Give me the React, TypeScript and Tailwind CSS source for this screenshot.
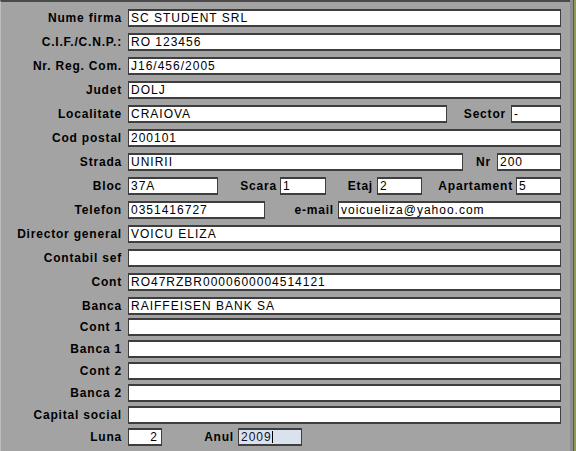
import React from 'react';

const font = { fontFamily: '"Liberation Sans", Arial, sans-serif' };

interface FieldProps {
  value?: string;
  className?: string;
  right?: boolean;
}

const Field: React.FC<FieldProps> = ({ value = '', className = '', right }) => (
  <div
    className={`h-[18px] bg-white border-y-2 border-x border-[#3e3e3e] flex items-center px-[2px] text-[12px] leading-none tracking-[1px] text-black whitespace-nowrap overflow-hidden ${
      right ? 'justify-end' : ''
    } ${className}`}
  >
    {value}
  </div>
);

const Label: React.FC<{ children: React.ReactNode; className?: string }> = ({ children, className = '' }) => (
  <div className={`text-[12px] font-bold tracking-[0.8px] text-black whitespace-nowrap text-right leading-none ${className}`}>
    {children}
  </div>
);

const Row: React.FC<{ label: string; children: React.ReactNode }> = ({ label, children }) => (
  <div className="flex items-center h-[18px]">
    <Label className="w-[121px] shrink-0">{label}</Label>
    <div className="ml-[6px] w-[433px] flex items-center">{children}</div>
  </div>
);

export default function App() {
  return (
    <div className="w-[576px] h-[451px] bg-[#a3a3a3] flex overflow-hidden" style={font}>
      <div className="flex-1 flex flex-col border-t-2 border-[#4a4a4a] border-l border-l-[#bdbdbd] pt-[7px]">
        <div className="flex flex-col gap-[6px]">
          <Row label="Nume firma">
            <Field value="SC STUDENT SRL" className="flex-1" />
          </Row>
          <Row label="C.I.F./C.N.P.:">
            <Field value="RO 123456" className="flex-1" />
          </Row>
          <Row label="Nr. Reg. Com.">
            <Field value="J16/456/2005" className="flex-1" />
          </Row>
          <Row label="Judet">
            <Field value="DOLJ" className="flex-1" />
          </Row>
          <Row label="Localitate">
            <Field value="CRAIOVA" className="w-[319px]" />
            <Label className="flex-1 pr-[5px]">Sector</Label>
            <Field value="-" className="w-[50px]" />
          </Row>
          <Row label="Cod postal">
            <Field value="200101" className="flex-1" />
          </Row>
          <Row label="Strada">
            <Field value="UNIRII" className="w-[335px]" />
            <Label className="flex-1 pr-[6px]">Nr</Label>
            <Field value="200" className="w-[64px]" />
          </Row>
          <Row label="Bloc">
            <Field value="37A" className="w-[90px]" />
            <Label className="w-[62px] pr-[3px]">Scara</Label>
            <Field value="1" className="w-[46px]" />
            <Label className="w-[51px] pr-[4px]">Etaj</Label>
            <Field value="2" className="w-[45px]" />
            <Label className="w-[94px] pr-[3px]">Apartament</Label>
            <Field value="5" className="flex-1" />
          </Row>
          <Row label="Telefon">
            <Field value="0351416727" className="w-[137px]" />
            <Label className="w-[73px] pr-[4px]">e-mail</Label>
            <Field value="voicueliza@yahoo.com" className="flex-1" />
          </Row>
          <Row label="Director general">
            <Field value="VOICU ELIZA" className="flex-1" />
          </Row>
          <Row label="Contabil sef">
            <Field className="flex-1" />
          </Row>
          <Row label="Cont">
            <Field value="RO47RZBR0000600004514121" className="flex-1" />
          </Row>
          <Row label="Banca">
            <Field value="RAIFFEISEN BANK SA" className="flex-1" />
          </Row>
        </div>
        <div className="flex flex-col gap-[4px] mt-[3px]">
          <Row label="Cont 1">
            <Field className="flex-1" />
          </Row>
          <Row label="Banca 1">
            <Field className="flex-1" />
          </Row>
          <Row label="Cont 2">
            <Field className="flex-1" />
          </Row>
          <Row label="Banca 2">
            <Field className="flex-1" />
          </Row>
          <Row label="Capital social">
            <Field className="flex-1" />
          </Row>
          <Row label="Luna">
            <Field value="2" right className="w-[34px] pr-[3px]" />
            <Label className="w-[76px] pr-[4px]">Anul</Label>
            <div className="w-[64px] h-[18px] bg-[#dae2ee] border-y-2 border-x border-[#3e3e3e] flex items-center px-[2px] text-[12px] leading-none tracking-[1px] text-[#101030]">
              2009
              <span className="w-px h-[12px] bg-black" />
            </div>
          </Row>
        </div>
      </div>
      <div className="w-[3px] bg-[#8e8e8e]" />
      <div className="w-[1px] bg-[#55602e]" />
      <div className="w-[2px] bg-[#8d9a58]" />
    </div>
  );
}
